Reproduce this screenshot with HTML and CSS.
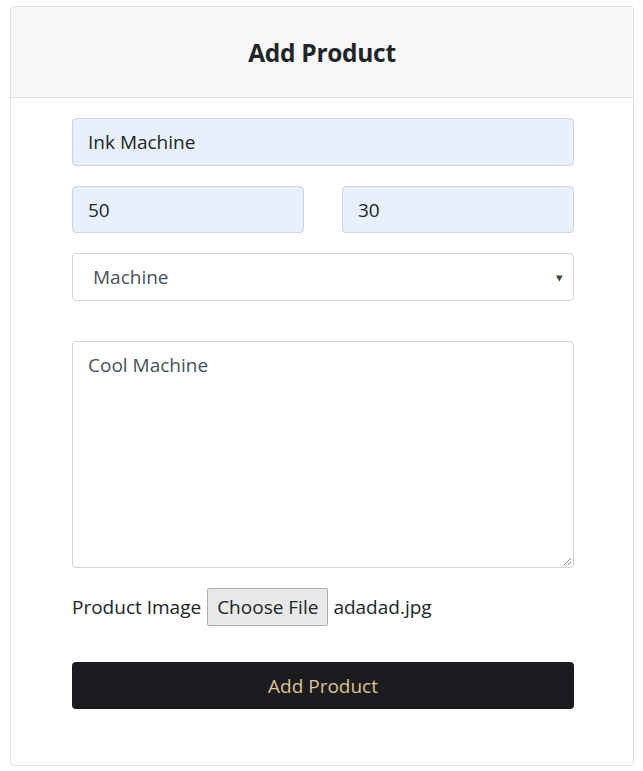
FILE: index.html
```html
<!DOCTYPE html>
<html>
<head>
<meta charset="utf-8">
<link rel="stylesheet" href="styles.css">
</head>
<body>
<div class="card">
  <div class="card-header"><h3>Add Product</h3></div>
  <form class="card-body">
    <div class="field filled">Ink Machine</div>
    <div class="row">
      <div class="field filled">50</div>
      <div class="field filled">30</div>
    </div>
    <div class="field select"><span>Machine</span><span class="caret">&#9662;</span></div>
    <div class="field textarea">Cool Machine
      <svg class="grip" width="10" height="10" viewBox="0 0 10 10"><path d="M9 2L2 9M9 6L6 9" stroke="#888" stroke-width="1"/></svg>
    </div>
    <div class="file-row">
      <span>Product Image</span>
      <span class="file-btn">Choose File</span>
      <span>adadad.jpg</span>
    </div>
    <div class="submit">Add Product</div>
  </form>
</div>
</body>
</html>
```
FILE: styles.css
```css
* { box-sizing: border-box; }
body {
  margin: 0;
  padding: 6px 9px 0 10px;
  font-family: "Open Sans", "Noto Sans", sans-serif;
  color: #212529;
  background: #fff;
}
.card {
  border: 1px solid #dfdfdf;
  border-radius: 4px;
  height: 760px;
  display: flex;
  flex-direction: column;
}
.card-header {
  background: #f7f7f7;
  border-bottom: 1px solid #dcdcdc;
  height: 91px;
  display: flex;
  align-items: center;
  justify-content: center;
  border-radius: 4px 4px 0 0;
}
.card-header h3 {
  margin: 0;
  font-size: 24.5px;
  font-weight: 700;
  color: #212529;
  letter-spacing: -0.3px;
}
.card-body {
  padding: 20px 59px 0 61px;
  display: flex;
  flex-direction: column;
}
.field {
  height: 48px;
  border: 1px solid #ced4da;
  border-radius: 4px;
  padding: 0 15px;
  display: flex;
  align-items: center;
  font-size: 19px;
  color: #212529;
  background: #fff;
}
.field.filled { background: #e8f0fe; }
.row {
  display: flex;
  gap: 38px;
  margin-top: 20px;
}
.row .field { flex: 1; height: 47px; }
.card-body > .field + .row, .row + .field { margin-top: 20px; }
.select {
  justify-content: space-between;
  padding: 0 10px 0 20px;
  color: #495057;
}
.caret { font-size: 13px; color: #444; }
.textarea {
  margin-top: 40px;
  height: 227px;
  align-items: flex-start;
  padding-top: 10px;
  color: #495057;
  position: relative;
}
.grip { position: absolute; right: 1px; bottom: 1px; }
.file-row {
  margin-top: 20px;
  display: flex;
  align-items: center;
  gap: 5px;
  font-size: 19px;
  height: 38px;
}
.file-btn {
  border: 1px solid #adadad;
  background: #e9e9e9;
  border-radius: 2px;
  padding: 0 9px;
  height: 38px;
  display: flex;
  align-items: center;
  margin-left: 1px;
}
.submit {
  margin-top: 36px;
  height: 47px;
  background: #1b1a1f;
  border-radius: 4px;
  color: #dcc492;
  font-size: 19px;
  display: flex;
  align-items: center;
  justify-content: center;
}
```
